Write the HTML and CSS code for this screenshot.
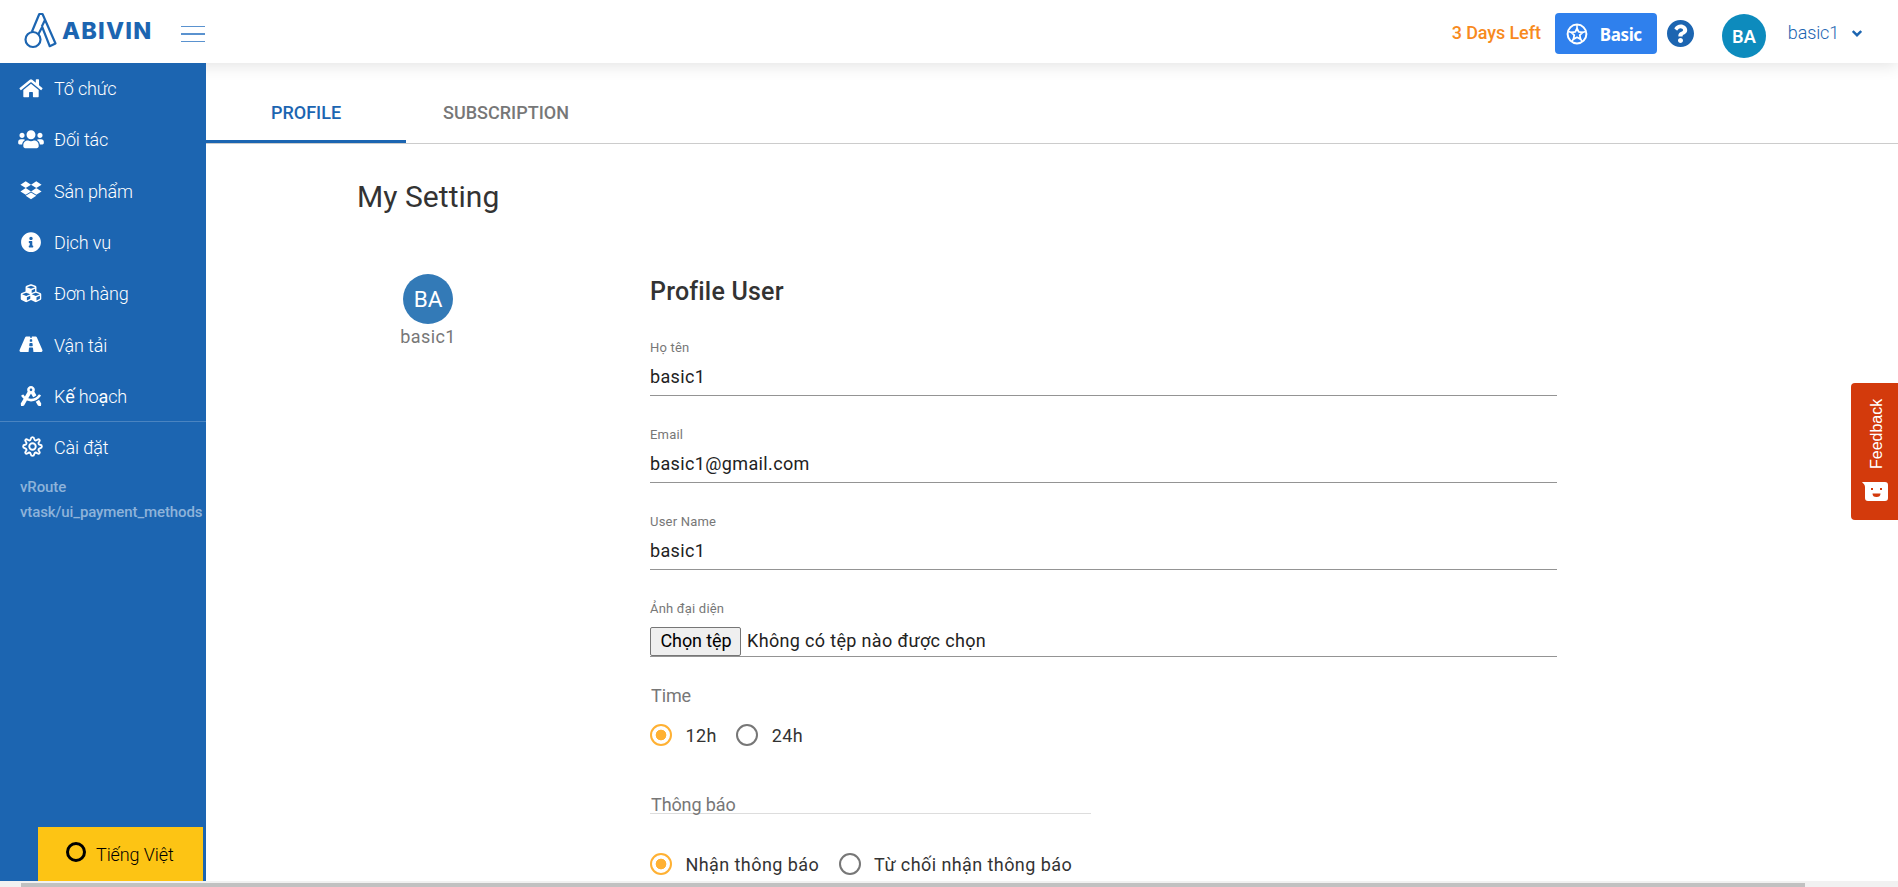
FILE: index.html
```html
<!DOCTYPE html>
<html lang="vi">
<head>
<meta charset="utf-8">
<title>Abivin - My Setting</title>
<link rel="stylesheet" href="styles.css">
</head>
<body>
<div class="app">
  <header class="topbar">
    <div class="brand">
      <svg class="brand-mark" viewBox="0 0 34 37" fill="none" stroke="#1c65b1" stroke-width="2.200" stroke-linejoin="round">
        <circle cx="9" cy="27.5" r="7.5"/>
        <path d="M7.800 20L15.300 2h3.200L31.500 31.500l-5.800 2.700L18.200 15l-4 7.500"/>
        <path d="M17.800 14.500L21 8"/>
      </svg>
      <span class="brand-name">ABIVIN</span>
    </div>
    <div class="burger"><i></i><i class="mid"></i><i></i></div>
    <div class="top-right">
      <span class="days">3 Days Left</span>
      <span class="plan">
        <svg class="plan-icon" viewBox="0 0 22 22" fill="none" stroke="#fff" stroke-width="2" stroke-linejoin="round"><circle cx="11" cy="11" r="9.4"/><path d="M11 5.400l1.700 3.500 3.900.5-2.800 2.800.7 3.900-3.500-1.800-3.500 1.800.7-3.900-2.800-2.800 3.900-.5z" stroke-width="1.800"/><path d="M11 2v3.500M2.500 8.500l3 1M19.500 8.500l-3 1M5.800 18.500l1.700-2.500M16.200 18.500l-1.700-2.500" stroke-width="1.500"/></svg>
        <span>Basic</span>
      </span>
      <svg class="help" viewBox="8 8 496 496" fill="#1c65b1"><path d="M504 256c0 136.997-111.043 248-248 248S8 392.997 8 256C8 119.083 119.043 8 256 8s248 111.083 248 248zM262.655 90c-54.497 0-89.255 22.957-116.549 63.758-3.536 5.286-2.353 12.415 2.715 16.258l34.699 26.31c5.205 3.947 12.621 3.008 16.665-2.122 17.864-22.658 30.113-35.797 57.303-35.797 20.429 0 45.698 13.148 45.698 32.958 0 14.976-12.363 22.667-32.534 33.976C247.128 238.528 216 254.941 216 296v4c0 6.627 5.373 12 12 12h56c6.627 0 12-5.373 12-12v-1.333c0-28.462 83.186-29.647 83.186-106.667 0-58.002-60.165-102-116.531-102zM256 338c-25.365 0-46 20.635-46 46 0 25.364 20.635 46 46 46s46-20.636 46-46c0-25.365-20.635-46-46-46z"/></svg>
      <span class="avatar-top">BA</span>
      <span class="account">basic1</span>
      <svg class="caret" viewBox="0 0 10 7" fill="none" stroke="#1c65b1" stroke-width="2.400"><path d="M.8 1L5 5.200 9.200 1"/></svg>
    </div>
  </header>
  <div class="body">
    <aside class="sidebar">
      <nav class="menu">
        <a class="item"><svg class="ic" viewBox="0 0 576 512"><path d="M280.37 148.26L96 300.11V464a16 16 0 0 0 16 16l112.06-.29a16 16 0 0 0 15.92-16V368a16 16 0 0 1 16-16h64a16 16 0 0 1 16 16v95.64a16 16 0 0 0 16 16.05L464 480a16 16 0 0 0 16-16V300L295.67 148.26a12.19 12.19 0 0 0-15.3 0zM571.6 251.47L488 182.56V44.05a12 12 0 0 0-12-12h-56a12 12 0 0 0-12 12v72.61L318.47 43a48 48 0 0 0-61 0L4.34 251.47a12 12 0 0 0-1.6 16.9l25.5 31A12 12 0 0 0 45.15 301l235.22-193.74a12.19 12.19 0 0 1 15.3 0L530.9 301a12 12 0 0 0 16.9-1.6l25.5-31a12 12 0 0 0-1.7-16.93z"/></svg><span>Tổ chức</span></a>
        <a class="item"><svg class="ic" viewBox="0 0 640 512"><path d="M96 224c35.3 0 64-28.7 64-64s-28.7-64-64-64-64 28.7-64 64 28.7 64 64 64zm448 0c35.3 0 64-28.7 64-64s-28.7-64-64-64-64 28.7-64 64 28.7 64 64 64zm32 32h-64c-17.6 0-33.5 7.1-45.1 18.6 40.3 22.1 68.9 62 75.1 109.4h66c17.7 0 32-14.3 32-32v-32c0-35.3-28.7-64-64-64zm-256 0c61.9 0 112-50.1 112-112S381.9 32 320 32 208 82.1 208 144s50.1 112 112 112zm76.8 32h-8.3c-20.8 10-43.9 16-68.5 16s-47.6-6-68.5-16h-8.3C179.6 288 128 339.6 128 403.2V432c0 26.500 21.500 48 48 48h288c26.500 0 48-21.500 48-48v-28.800c0-63.600-51.600-115.200-115.200-115.200zm-223.700-13.400C161.500 263.100 145.600 256 128 256H64c-35.300 0-64 28.700-64 64v32c0 17.700 14.300 32 32 32h65.900c6.300-47.400 34.900-87.300 75.200-109.400z"/></svg><span>Đối tác</span></a>
        <a class="item"><svg class="ic" viewBox="0 0 528 512"><path d="M264.400 116.300l-132 84.300 132 84.300-132 84.300L0 284.100l132.300-84.300L0 116.300 132.300 32l132.100 84.300zM131.600 395.700l132-84.300 132 84.300-132 84.300-132-84.300zm132.800-111.600l132-84.300-132-83.600L395.700 32 528 116.300l-132.300 84.300L528 284.800l-132.300 84.300-131.300-85z"/></svg><span>Sản phẩm</span></a>
        <a class="item"><svg class="ic" viewBox="0 0 512 512"><path d="M256 8C119.043 8 8 119.083 8 256c0 136.997 111.043 248 248 248s248-111.003 248-248C504 119.083 392.957 8 256 8zm0 110c23.196 0 42 18.804 42 42s-18.804 42-42 42-42-18.804-42-42 18.804-42 42-42zm56 254c0 6.627-5.373 12-12 12h-88c-6.627 0-12-5.373-12-12v-24c0-6.627 5.373-12 12-12h12v-64h-12c-6.627 0-12-5.373-12-12v-24c0-6.627 5.373-12 12-12h64c6.627 0 12 5.373 12 12v100h12c6.627 0 12 5.373 12 12v24z"/></svg><span>Dịch vụ</span></a>
        <a class="item"><svg class="ic" viewBox="0 0 512 512"><path d="M488.6 250.2L392 214V105.500c0-15-9.300-28.400-23.400-33.700l-100-37.500c-8.100-3.100-17.100-3.100-25.300 0l-100 37.500c-14.100 5.300-23.400 18.700-23.400 33.700V214l-96.600 36.200C9.300 255.500 0 268.900 0 283.900V394c0 13.600 7.700 26.100 19.900 32.200l100 50c10.100 5.100 22.100 5.100 32.200 0l103.900-52 103.900 52c10.100 5.100 22.100 5.100 32.200 0l100-50c12.200-6.100 19.900-18.600 19.900-32.200V283.900c0-15-9.300-28.400-23.400-33.700zM358 214.800l-85 31.900v-68.200l85-37v73.300zM154 104.100l102-38.200 102 38.200v.6l-102 41.400-102-41.400v-.6zm84 291.100l-85 42.500v-79.100l85-38.800v75.400zm0-112l-102 41.400-102-41.400v-.6l102-38.200 102 38.200v.6zm240 112l-85 42.500v-79.100l85-38.800v75.400zm0-112l-102 41.400-102-41.400v-.6l102-38.200 102 38.200v.6z"/></svg><span>Đơn hàng</span></a>
        <a class="item"><svg class="ic" viewBox="0 0 576 512"><path d="M573.19 402.67l-139.79-320C428.43 71.29 417.6 64 405.68 64h-97.59l2.45 23.16c.5 4.72-3.21 8.84-7.96 8.84h-29.16c-4.75 0-8.46-4.12-7.96-8.84L267.91 64h-97.59c-11.93 0-22.76 7.29-27.73 18.67L2.8 402.67C-6.45 423.86 8.31 448 30.54 448h196.84l10.31-97.68c.86-8.14 7.72-14.32 15.91-14.32h68.8c8.19 0 15.05 6.18 15.91 14.32L348.62 448h196.84c22.23 0 36.99-24.14 27.73-45.33zM260.4 135.16a8 8 0 0 1 7.96-7.16h39.29c4.09 0 7.53 3.09 7.96 7.16l4.6 43.58c.75 7.09-4.8 13.26-11.93 13.26h-40.54c-7.13 0-12.68-6.17-11.93-13.26l4.59-43.58zM315.64 304h-55.29c-9.5 0-16.91-8.23-15.91-17.68l5.07-48c.86-8.14 7.72-14.32 15.91-14.32h45.15c8.19 0 15.05 6.18 15.91 14.32l5.07 48c1 9.45-6.41 17.68-15.91 17.68z"/></svg><span>Vận tải</span></a>
        <a class="item"><svg class="ic" viewBox="0 0 512 512"><path d="M457.01 344.42c-25.05 20.33-52.63 37.18-82.54 49.05l54.38 94.19 53.95 23.04c9.81 4.19 20.89-2.21 22.17-12.8l7.02-58.25-54.98-95.23zm42.49-94.56c4.86-7.67 1.89-17.99-6.05-22.39l-28.07-15.57c-7.48-4.15-16.61-1.46-21.26 5.72C403.01 281.15 332.25 320 256 320c-23.93 0-47.23-4.25-69.41-11.53l67.36-116.68c.7.02 1.34.21 2.04.21s1.35-.19 2.04-.21l51.09 88.5c31.23-8.96 59.56-25.75 82.61-48.92l-51.79-89.71C347.39 128.03 352 112.63 352 96c0-53.02-42.98-96-96-96s-96 42.98-96 96c0 16.63 4.61 32.03 12.05 45.66l-68.3 118.31c-12.55-11.61-23.96-24.59-33.68-39-4.79-7.1-13.97-9.62-21.38-5.33l-27.75 16.07c-7.85 4.54-10.63 14.9-5.64 22.47 15.57 23.64 34.69 44.21 55.98 62.02L0 439.66l7.02 58.25c1.28 10.59 12.36 16.99 22.17 12.8l53.95-23.04 70.8-122.63C186.13 377.28 220.62 384 256 384c99.05 0 190.88-51.01 243.5-134.14zM256 64c17.67 0 32 14.33 32 32s-14.33 32-32 32-32-14.33-32-32 14.33-32 32-32z"/></svg><span>K<b>ế</b> ho<b>ạ</b>ch</span></a>
      </nav>
      <a class="item settings"><svg class="ic gear" viewBox="0 0 24 24" fill="none" stroke="#fff" stroke-width="2.200" stroke-linejoin="round"><path d="M12 1.300Q13.700 1.300 14 3.300Q14.300 5 15.500 5.200Q16.600 5 17.500 4.300Q19 3.200 19.900 4.100Q20.800 5 19.700 6.500Q18.600 7.600 18.900 8.600Q19.400 9.700 20.700 10Q22.700 10.300 22.700 12Q22.700 13.700 20.700 14Q19.400 14.300 18.900 15.400Q18.600 16.400 19.700 17.500Q20.800 19 19.900 19.900Q19 20.800 17.500 19.700Q16.600 19 15.500 18.800Q14.300 19 14 20.700Q13.700 22.700 12 22.700Q10.300 22.700 10 20.700Q9.700 19 8.500 18.800Q7.400 19 6.500 19.700Q5 20.800 4.100 19.900Q3.200 19 4.300 17.500Q5.400 16.400 5.100 15.400Q4.600 14.300 3.300 14Q1.300 13.700 1.300 12Q1.300 10.300 3.300 10Q4.600 9.700 5.100 8.600Q5.400 7.600 4.300 6.500Q3.200 5 4.100 4.100Q5 3.200 6.500 4.300Q7.400 5 8.500 5.200Q9.700 5 10 3.300Q10.300 1.300 12 1.300z"/><circle cx="12" cy="12" r="3.700"/></svg><span>Cài đặt</span></a>
      <div class="version"><div>vRoute</div><div>vtask/ui_payment_methods</div></div>
      <div class="language"><i class="lang-ring"></i><span>Tiếng Việt</span></div>
    </aside>
    <main class="content">
      <div class="tabs"><div class="tab active">PROFILE</div><div class="tab">SUBSCRIPTION</div></div>
      <h1 class="title">My Setting</h1>
      <div class="columns">
        <div class="who"><div class="avatar">BA</div><div class="who-name">basic1</div></div>
        <form class="form">
          <h2 class="form-title">Profile User</h2>
          <div class="field"><label class="label">Họ tên</label><div class="value">basic1</div></div>
          <div class="field"><label class="label">Email</label><div class="value">basic1@gmail.com</div></div>
          <div class="field"><label class="label">User Name</label><div class="value">basic1</div></div>
          <div class="field"><label class="label">Ảnh đại diện</label><div class="value file"><span class="file-btn">Chọn tệp</span><span>Không có tệp nào được chọn</span></div></div>
          <div class="group">Time</div>
          <div class="radios"><i class="radio on"></i><span class="opt">12h</span><i class="radio"></i><span class="opt">24h</span></div>
          <div class="group notice">Thông báo</div>
          <div class="radios second"><i class="radio on"></i><span class="opt">Nhận thông báo</span><i class="radio"></i><span class="opt">Từ chối nhận thông báo</span></div>
        </form>
      </div>
    </main>
  </div>
  <div class="scrollbar"><div class="thumb"></div></div>
  <div class="feedback">
    <span class="feedback-text">Feedback</span>
    <svg class="feedback-icon" viewBox="0 0 26 19"><path d="M0 0h23a3 3 0 0 1 3 3v13a3 3 0 0 1-3 3H6a3 3 0 0 1-3-3V5C3 3 1.500 1.500 0 0z" fill="#fff"/><path d="M9 6h2v2H9zM18 6h2v2h-2zM10.500 11.500h8a4 3.500 0 0 1-8 0z" fill="#d33a0c"/></svg>
  </div>
</div>
</body>
</html>
```

FILE: styles.css
```css
* { box-sizing: border-box; }
body { margin: 0; font-family: Roboto, "Liberation Sans", sans-serif; font-size: 18px; color: #333; background: #fff; overflow: hidden; }
.app { width: 1898px; height: 887px; display: flex; flex-direction: column; position: relative; overflow: hidden; }

.topbar { height: 63px; flex: none; display: flex; align-items: flex-start; background: #fff; box-shadow: 0 2px 16px rgba(0,0,0,.12); }
.brand { display: flex; width: 181px; padding: 12px 0 0 24px; }
.brand-mark { width: 34px; height: 37px; flex: none; }
.brand-name { margin-left: 4px; font: 800 23.500px/38px Inter, sans-serif; color: #1c65b1; letter-spacing: 1.200px; white-space: nowrap; }
.burger { width: 24px; height: 16px; margin-top: 26px; display: flex; flex-direction: column; justify-content: space-between; }
.burger i { height: 1px; background: #5a92cf; }
.burger .mid { height: 2px; }
.top-right { flex: 1; display: flex; justify-content: flex-end; padding-right: 36px; }
.days { color: #f78a1d; font-weight: 500; line-height: 24px; letter-spacing: -.1px; margin: 21px 14px 0 0; }
.plan { width: 102px; height: 41px; margin-top: 13px; background: #2f80ed; border-radius: 4px; display: flex; align-items: center; padding-left: 11px; gap: 12px; color: #fff; font: 700 17px/24px "Noto Sans", sans-serif; letter-spacing: -.4px; }
.plan span { margin-top: 2px; }
.plan-icon { width: 22px; height: 22px; }
.help { width: 27px; height: 27px; margin: 20px 0 0 10px; }
.avatar-top { width: 44px; height: 44px; margin: 14px 0 0 28px; border-radius: 50%; background: #0d8bbd; color: #fff; font: 600 18px/45px "Noto Sans", sans-serif; text-align: center; }
.account { margin: 21px 0 0 22px; line-height: 24px; font-weight: 300; letter-spacing: -.15px; color: #1c65b1; }
.caret { width: 10px; height: 7px; margin: 30px 0 0 13px; }

.body { flex: 1; display: flex; min-height: 0; }
.sidebar { width: 206px; background: #1c65b1; color: #fff; display: flex; flex-direction: column; font-weight: 300; position: relative; }
.menu { height: 359px; border-bottom: 1px solid #4a84c1; }
.item { height: 51.300px; display: flex; align-items: center; }
.item span { letter-spacing: -.15px; }
.item b { font-weight: 400; }
.ic { height: 20.500px; width: 26px; margin: -1px 10px 0 18px; fill: #fff; }
.gear { fill: none; width: 21px; height: 21px; margin: -2px 11px 0 22px; }
.version { padding: 2px 0 0 20px; font-weight: 500; font-size: 15px; line-height: 25px; letter-spacing: -.1px; color: #8eb3da; white-space: nowrap; }
.language { margin: auto 3px 0 38px; height: 54px; background: #fdc414; color: #000; display: flex; align-items: center; padding-left: 28px; font-weight: 300; letter-spacing: -.1px; }
.lang-ring { width: 20px; height: 20px; border: 3px solid #000; border-radius: 50%; margin: -4px 10px 0 0; }

.content { flex: 1; }
.tabs { height: 81px; border-bottom: 1px solid #ccc; display: flex; align-items: flex-end; }
.tab { width: 200px; height: 60px; line-height: 59px; text-align: center; font-weight: 500; color: #777; border-bottom: 3px solid transparent; }
.tab.active { color: #1c65b1; border-color: #1c65b1; }
.title { margin: 34px 0 0 151px; font-weight: 400; font-size: 30px; line-height: 38px; letter-spacing: .05px; }
.columns { display: flex; }
.who { width: 50px; margin: 58px 0 0 197px; display: flex; flex-direction: column; align-items: center; }
.avatar { width: 50px; height: 50px; border-radius: 50%; background: #337ab7; color: #fff; font-size: 22.500px; line-height: 50px; text-align: center; }
.who-name { line-height: 26px; color: #777; letter-spacing: .4px; }
.form { width: 907px; margin-left: 197px; letter-spacing: .36px; }
.form-title { margin: 60px 0 0; font-size: 25px; line-height: 32px; font-weight: 500; letter-spacing: .2px; }
.field { height: 87px; padding-top: 29px; border-bottom: 1px solid #949494; }
.form-title + .field { height: 88px; padding-top: 30px; }
.label { display: block; font-size: 13px; line-height: 20px; color: #777; letter-spacing: .2px; }
.value { height: 34px; line-height: 38px; color: #222; white-space: nowrap; }
.file { display: flex; align-items: flex-start; line-height: 27px; padding-top: 8px; gap: 6px; letter-spacing: .34px; }
.file-btn { width: 91px; height: 29px; flex: none; line-height: 26px; border: 1px solid #767676; border-radius: 2px; background: #efefef; color: #000; text-align: center; letter-spacing: -.1px; padding-left: 1px; }
.group { color: #777; line-height: 26px; margin-top: 26px; letter-spacing: -.1px; padding-left: 1px; }
.radios { display: flex; align-items: center; height: 26px; margin-top: 13px; }
.radio { width: 22px; height: 22px; border: 2px solid #777; border-radius: 50%; margin-right: 13.500px; }
.radio.on { border-color: #ffb133; background: radial-gradient(circle, #ffb133 5px, #fff 5.700px); }
.opt { margin-right: 19.500px; }
.notice { width: 441px; height: 22px; margin-top: 44px; border-bottom: 1px solid #ddd; }
.second { margin-top: 37px; letter-spacing: .42px; }

.scrollbar { height: 6px; flex: none; background: #f1f1f1; padding: 2px 93px 0 21px; }
.thumb { height: 4px; background: #c1c1c1; }
.feedback { position: absolute; right: 0; top: 383px; width: 47px; height: 137px; background: #d33a0c; border-radius: 4px 0 0 4px; display: flex; flex-direction: column; align-items: center; padding: 15px 0 0 1px; color: #fff; }
.feedback-text { writing-mode: vertical-rl; transform: rotate(180deg); font: 16px/20px "Liberation Sans", sans-serif; height: 71px; margin-left: 3px; }
.feedback-icon { width: 26px; height: 19px; flex: none; margin-top: 13px; }
```
